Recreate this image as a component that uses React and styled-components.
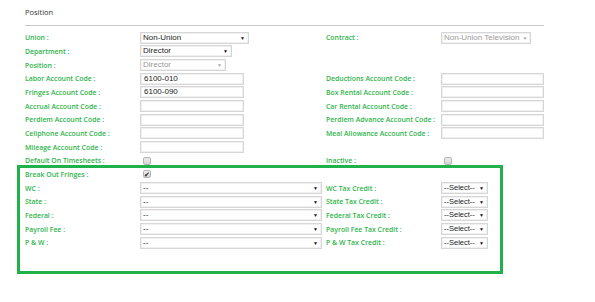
import React from 'react';
import styled, { createGlobalStyle } from 'styled-components';

const GlobalStyle = createGlobalStyle`
  body {
    margin: 0;
    background: #fff;
    font-family: "Open Sans", "Liberation Sans", sans-serif;
  }
`;

const Page = styled.div`
  width: 595px;
  height: 302px;
  padding: 6px 0 0 25px;
  box-sizing: border-box;
  overflow: hidden;
`;

const Title = styled.div`
  font-size: 7.5px;
  color: #333;
  height: 12px;
  line-height: 12px;
`;

const Rule = styled.div`
  width: 519px;
  height: 1px;
  background: #c8c8c8;
  margin: 7px 0 5px;
`;

const Grid = styled.div`
  display: grid;
  grid-template-columns: 115px 186px 115px 1fr;
  grid-auto-rows: 13.67px;
  align-items: center;
`;

const FringeBox = styled.div`
  margin: -3px 0 0 -8px;
  width: 486px;
  height: 109px;
  border: 3px solid #1fb24a;
  box-sizing: border-box;
  padding: 0 0 0 5px;
`;

const Label = styled.div`
  font-size: 6.9px;
  font-weight: 600;
  color: #2fb54b;
  white-space: nowrap;
`;

const Empty = styled.div``;

const Field = styled.div`
  box-sizing: border-box;
  width: ${p => p.w}px;
  height: 12px;
  border: 1px solid #d6d6d6;
  box-shadow: inset 0 0 0 1px #f0f0f0;
  background: #fff;
  font-family: "Liberation Sans", Arial, sans-serif;
  font-size: 8px;
  color: #222;
  padding: 0 3px;
  line-height: 10px;
  white-space: nowrap;
  overflow: hidden;
  display: flex;
  align-items: center;
  justify-content: space-between;
`;

const Select = styled(Field)`
  padding: 0 3px 0 2px;
  color: ${p => (p.disabled ? '#999' : '#222')};
  font-size: ${p => (p.small ? 7.5 : 8)}px;
`;

const Arrow = styled.span`
  font-size: 5px;
  color: ${p => (p.disabled ? '#aaa' : '#111')};
  margin-left: 3px;
  flex-shrink: 0;
`;

const Check = styled.div`
  width: 8px;
  height: 8px;
  margin-left: 3px;
  border: 1px solid #b5b5b5;
  border-radius: 2px;
  background: linear-gradient(#eee, #d4d4d4);
  box-sizing: border-box;
  display: flex;
  align-items: center;
  justify-content: center;
  font-size: 7px;
  line-height: 1;
  color: #222;
`;

const Sel = ({ w, value, disabled, small }) => (
  <Select w={w} disabled={disabled} small={small}>
    <span>{value}</span>
    <Arrow disabled={disabled}>▼</Arrow>
  </Select>
);

const topRows = [
  ['Union :', <Sel w={109} value="Non-Union" />, 'Contract :', <Sel w={90} value="Non-Union Television" disabled />],
  ['Department :', <Sel w={92} value="Director" />, null, null],
  ['Position :', <Sel w={86} value="Director" disabled />, null, null],
  ['Labor Account Code :', <Field w={104}>6100-010</Field>, 'Deductions Account Code :', <Field w={103} />],
  ['Fringes Account Code :', <Field w={104}>6100-090</Field>, 'Box Rental Account Code :', <Field w={103} />],
  ['Accrual Account Code :', <Field w={104} />, 'Car Rental Account Code :', <Field w={103} />],
  ['Perdiem Account Code :', <Field w={104} />, 'Perdiem Advance Account Code :', <Field w={103} />],
  ['Cellphone Account Code :', <Field w={104} />, 'Meal Allowance Account Code :', <Field w={103} />],
  ['Mileage Account Code :', <Field w={104} />, null, null],
  ['Default On Timesheets :', <Check />, 'Inactive :', <Check />],
];

const fringeRows = [
  ['WC :', 'WC Tax Credit :'],
  ['State :', 'State Tax Credit :'],
  ['Federal :', 'Federal Tax Credit :'],
  ['Payroll Fee :', 'Payroll Fee Tax Credit :'],
  ['P & W :', 'P & W Tax Credit :'],
];

const Cell = ({ children }) => (children ? children : <Empty />);

export default function App() {
  return (
    <Page>
      <GlobalStyle />
      <Title>Position</Title>
      <Rule />
      <Grid>
        {topRows.map((r, i) => (
          <React.Fragment key={i}>
            {r[0] ? <Label>{r[0]}</Label> : <Empty />}
            <Cell>{r[1]}</Cell>
            {r[2] ? <Label>{r[2]}</Label> : <Empty />}
            <Cell>{r[3]}</Cell>
          </React.Fragment>
        ))}
      </Grid>
      <FringeBox>
        <Grid>
          <Label>Break Out Fringes :</Label>
          <Check>✔</Check>
          <Empty />
          <Empty />
          {fringeRows.map((r, i) => (
            <React.Fragment key={i}>
              <Label>{r[0]}</Label>
              <Sel w={182} value="--" />
              <Label>{r[1]}</Label>
              <Sel w={47} value="--Select--" small />
            </React.Fragment>
          ))}
        </Grid>
      </FringeBox>
    </Page>
  );
}
